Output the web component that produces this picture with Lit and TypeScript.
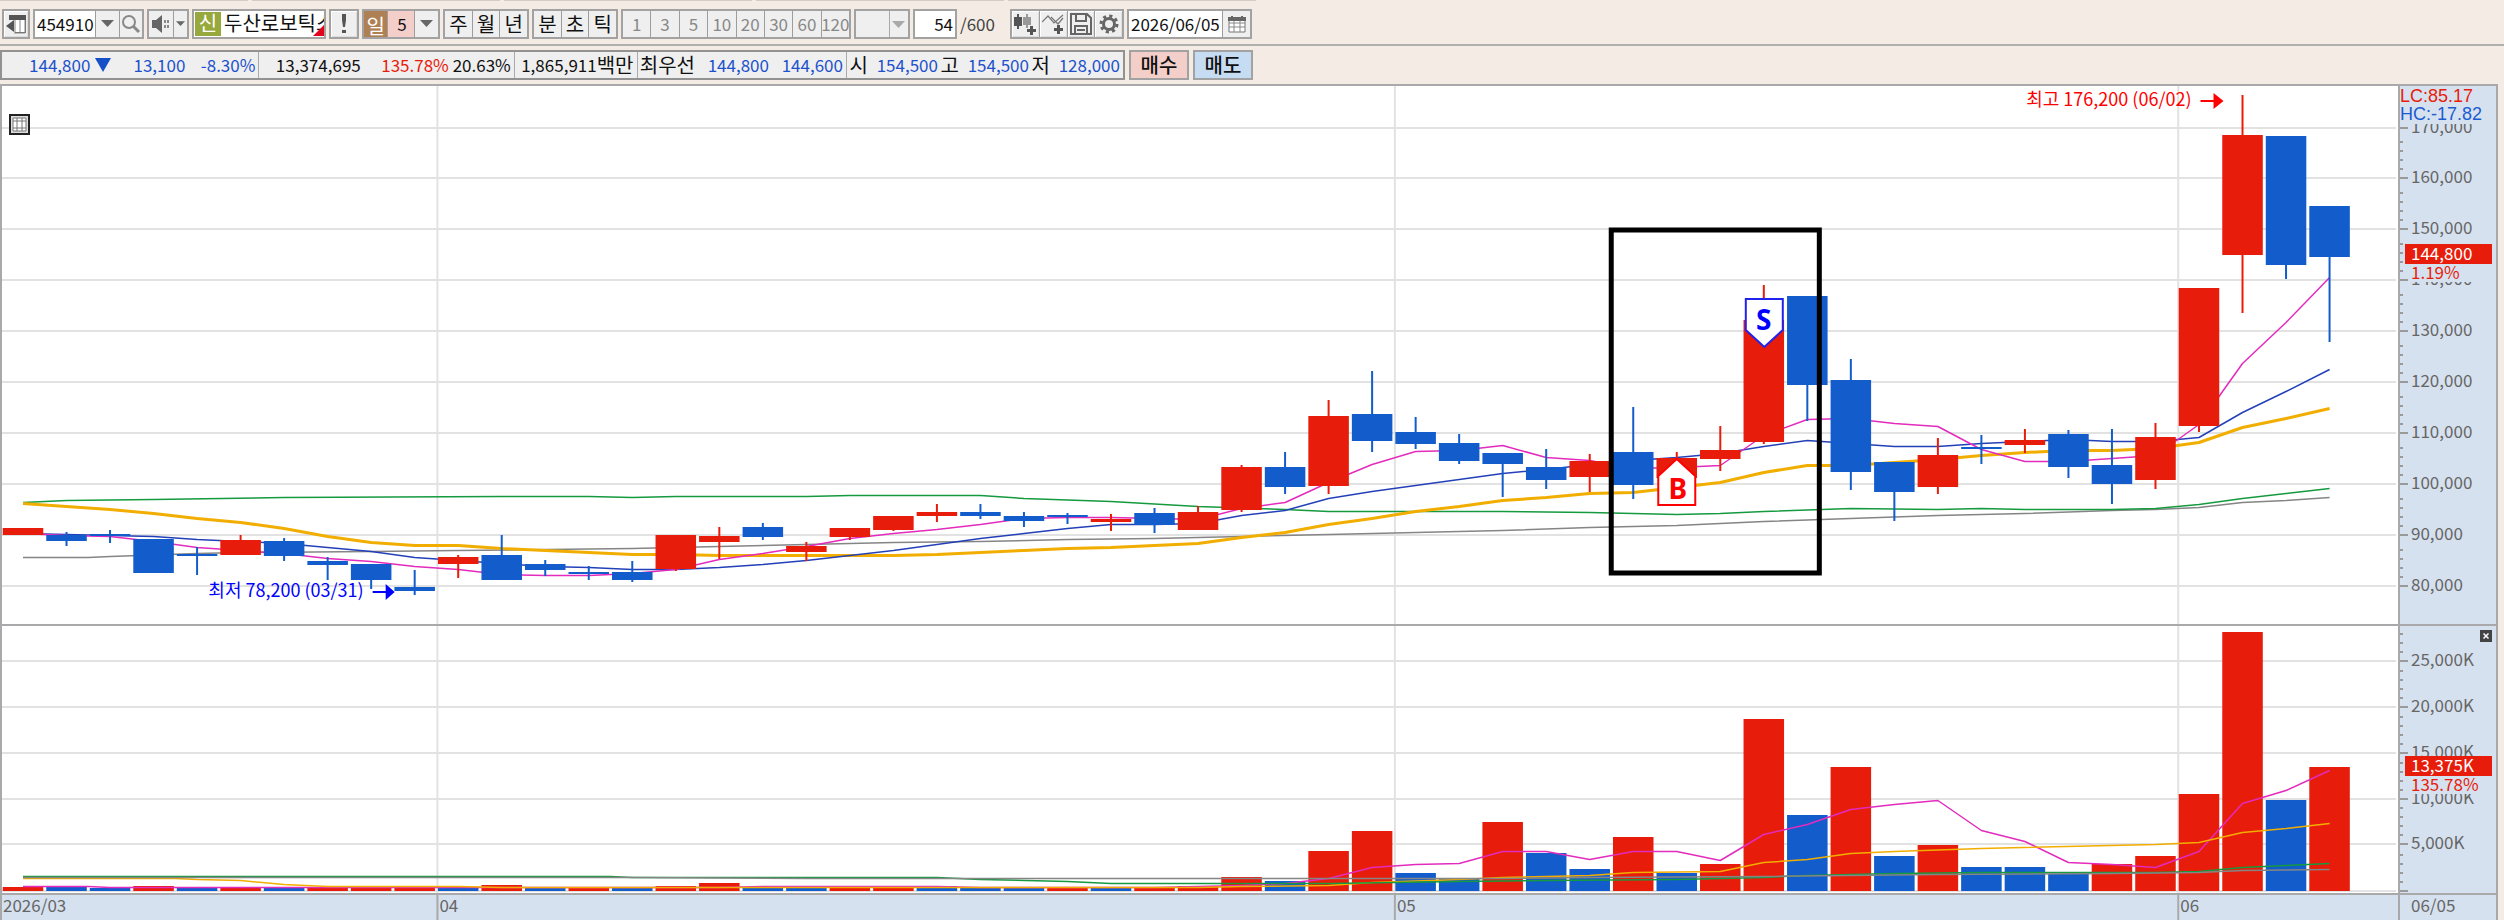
import { LitElement, html, css, svg } from "lit";
import { customElement, state } from "lit/decorators.js";
import { classMap } from "lit/directives/class-map.js";

/* One candle: body top, body bottom, wick top, wick bottom, rising flag (chart units). */
type Candle = [number, number, number, number, number];
/* One volume bar: top edge, rising flag. */
type Volume = [number, number];
type Points = [number, number][];

const CANDLES: Candle[] = [
  [528, 535, 528, 535, 1], [535, 541, 532, 546, 0], [534, 536, 530, 543, 0],
  [539, 573, 539, 573, 0], [554, 556, 547, 575, 0], [540, 555, 535, 555, 1],
  [541, 556, 538, 561, 0], [561, 565, 557, 580, 0], [564, 580, 564, 589, 0],
  [587, 591, 570, 595, 0], [557, 564, 555, 578, 1], [555, 580, 535, 580, 0],
  [564, 570, 560, 576, 0], [572, 574, 566, 580, 0], [572, 580, 561, 582, 0],
  [535, 569, 535, 571, 1], [536, 542, 527, 559, 1], [527, 537, 523, 540, 0],
  [546, 552, 542, 561, 1], [528, 537, 528, 540, 1], [516, 530, 516, 531, 1],
  [512, 516, 504, 522, 1], [512, 516, 504, 519, 0], [516, 521, 512, 527, 0],
  [515, 517, 513, 524, 0], [519, 522, 514, 531, 1], [513, 525, 508, 533, 0],
  [512, 530, 506, 530, 1], [467, 510, 465, 512, 1], [467, 487, 452, 494, 0],
  [416, 486, 400, 494, 1], [414, 441, 371, 452, 0], [432, 444, 417, 449, 0],
  [443, 461, 434, 464, 0], [453, 464, 453, 497, 0], [467, 480, 449, 489, 0],
  [461, 477, 454, 492, 1], [452, 485, 407, 499, 0], [458, 478, 452, 478, 1],
  [450, 459, 426, 471, 1], [320, 442, 285, 444, 1], [296, 385, 296, 421, 0],
  [380, 472, 359, 490, 0], [462, 492, 462, 521, 0], [455, 487, 438, 494, 1],
  [447, 449, 435, 464, 0], [440, 445, 429, 453, 1], [434, 467, 430, 478, 0],
  [465, 484, 429, 504, 0], [437, 480, 423, 489, 1], [288, 426, 288, 432, 1],
  [135, 255, 95, 313, 1], [136, 265, 136, 279, 0], [206, 257, 206, 342, 0],
];

const VOLUMES: Volume[] = [
  [887, 1], [886, 0], [888, 0], [886, 1], [888, 0], [888, 1], [888, 0], [888, 1], [888, 1],
  [888, 1], [887, 0], [885, 1], [888, 0], [888, 1], [888, 0], [886, 1], [883, 1], [888, 0],
  [888, 0], [888, 1], [888, 1], [886, 0], [888, 0], [888, 0], [888, 1], [888, 0], [888, 1],
  [886, 1], [877, 1], [881, 0], [851, 1], [831, 1], [873, 0], [879, 0], [822, 1], [853, 0],
  [869, 0], [837, 1], [873, 0], [864, 1], [719, 1], [815, 0], [767, 1], [856, 0], [845, 1],
  [867, 0], [867, 0], [874, 0], [864, 1], [856, 1], [794, 1], [632, 1], [800, 0], [767, 1],
];

const all = (...ys: number[]): Points => ys.map((y, i) => [i, y]);

const PRICE_MA: { cls: string; pts: Points }[] = [
  { cls: "gray", pts: [[0, 557], [1.5, 557], [2, 556], [4, 553], [5, 552], [8, 551], [10, 550], [12, 549], [14, 548], [16, 546], [18, 544], [20, 542], [22, 541], [24, 539], [26, 538], [28, 536], [30, 534], [32, 532], [34, 530], [36, 527], [38, 525], [40, 521], [42, 518], [44, 515], [46, 513], [48, 510], [49, 509], [50, 507], [51, 502], [52, 500], [53, 497]] },
  { cls: "green", pts: [[0, 502], [1, 500], [3, 499], [6, 497], [11, 496], [13, 496], [14, 497], [15, 496], [18, 496], [19, 495], [22, 495], [23, 498], [25, 501], [27, 506], [29, 509], [30, 511], [34, 511], [36, 512], [38, 514], [39, 513], [40, 511], [42, 508], [44, 509], [45, 508], [46, 509], [48, 509], [49, 508], [50, 504], [51, 498], [52, 493], [53, 488]] },
  { cls: "gold thick", pts: all(503, 506, 509, 513, 518, 522, 528, 536, 542, 545, 545, 548, 550, 552, 554, 554, 555, 555, 555, 555, 555, 554, 552, 550, 548, 547, 545, 543, 537, 532, 524, 518, 511, 506, 500, 497, 493, 492, 487, 482, 472, 465, 465, 462, 459, 455, 452, 450, 450, 448, 442, 427, 418, 408) },
  { cls: "navy", pts: all(533, 534, 535, 536, 539, 541, 543, 547, 551, 557, 560, 563, 566, 567, 569, 569, 567, 564, 560, 555, 550, 544, 538, 533, 528, 524, 524, 523, 515, 510, 498, 491, 485, 479, 473, 469, 464, 460, 457, 453, 446, 440, 443, 446, 446, 443, 441, 439, 441, 441, 437, 412, 391, 369) },
  { cls: "pink", pts: all(533, 535, 536, 541, 547, 550, 553, 558, 561, 566, 569, 574, 575, 575, 573, 569, 559, 553, 546, 538, 533, 529, 524, 518, 517, 517, 518, 519, 508, 502, 482, 464, 451, 450, 445, 457, 460, 468, 467, 465, 435, 419, 418, 423, 426, 449, 461, 461, 458, 455, 424, 363, 322, 277) },
];

const VOLUME_MA: { cls: string; pts: Points }[] = [
  { cls: "pink", pts: [[0, 886], [1.5, 886], [2, 887], [16, 887], [17, 886], [21, 886], [22, 887], [26, 887], [27, 886], [28, 885], [29, 883], [30, 878], [31, 867], [32, 864], [33, 863], [34, 851], [35, 851], [36, 859], [37, 851], [38, 851], [39, 860], [40, 834], [41, 824], [42, 809], [43, 804], [44, 800], [45, 830], [46, 841], [47, 862], [48, 864], [49, 867], [50, 851], [51, 803], [52, 790], [53, 770]] },
  { cls: "gold", pts: [[0, 878], [3.5, 878], [4, 879], [5, 880], [6, 884], [7, 886], [10, 886], [11, 887], [27, 887], [28, 886], [30, 885], [31, 882], [33, 879], [34, 877], [36, 875], [37, 872], [39, 871], [40, 862], [41, 859], [42, 853], [43, 851], [45, 848], [49, 844], [50, 842], [51, 832], [52, 828], [53, 823]] },
  { cls: "green", pts: [[0, 876], [13.5, 876], [14, 877], [21, 877], [22, 879], [24, 881], [25, 883], [30, 883], [33, 881], [35, 880], [38, 879], [39, 878], [40, 877], [41, 875], [43, 873], [45, 872], [49, 872], [50, 871], [51, 867], [52, 865], [53, 863]] },
  { cls: "gray", pts: [[0, 877], [14, 877], [18, 878], [34, 878], [36, 877], [40, 876], [44, 874], [48, 873], [50, 872], [51, 870], [53, 869]] },
];

const PRICE_TICKS: [string, number][] = [
  ["170,000", 128], ["160,000", 178], ["150,000", 229], ["140,000", 280], ["130,000", 331],
  ["120,000", 382], ["110,000", 433], ["100,000", 484], ["90,000", 535], ["80,000", 586],
];
const VOLUME_TICKS: [string, number][] = [
  ["25,000K", 661], ["20,000K", 707], ["15,000K", 753], ["10,000K", 799], ["5,000K", 844], ["", 891],
];
const MONTHS: [string, number][] = [["04", 10], ["05", 32], ["06", 50]];

const TOP = 84;
const BOTTOM = 920;
const RIGHT_SPACE = 105;
const REF_PLOT = 2399;

@customElement("stock-chart")
export class StockChart extends LitElement {
  @state() private w = 2504;
  private watcher?: ResizeObserver;

  static styles = css`
    :host { display: block; position: relative; font-family: "Noto Sans CJK KR", sans-serif; }
    svg { display: block; width: 100%; }
    text { font-size: 17px; fill: #666; }
    .wide { font-family: "Liberation Sans", "Noto Sans CJK KR", sans-serif; font-size: 18px; }
    .note { font-size: 18px; text-anchor: end; }
    .plot { fill: #fff; }
    .axis { fill: #d6e1ef; }
    .grid { stroke: #e2e2e2; stroke-width: 2; }
    .edge { stroke: #a9a9ab; stroke-width: 2; }
    .tick { stroke: #9a9a9a; stroke-width: 2; }
    .up { fill: #e81c0a; }
    .down { fill: #125ccb; }
    .wick { stroke-width: 2; }
    .wick.up { stroke: #e81c0a; }
    .wick.down { stroke: #125ccb; }
    .ma { fill: none; stroke-width: 1.5; stroke-linejoin: round; }
    .ma.thick { stroke-width: 3; }
    .pink { stroke: #e32bbd; }
    .navy { stroke: #2440b8; }
    .gold { stroke: #f2ae00; }
    .green { stroke: #159a3f; }
    .gray { stroke: #858585; }
    .red-text { fill: #f00; }
    .rise-text { fill: #e81c0a; }
    .fall-text { fill: #1d5bd0; }
    .blue-text { fill: #00f; }
    .white-text { fill: #fff; }
    .focus { fill: none; stroke: #000; stroke-width: 5; }
    .sell, .buy { fill: #fff; stroke-width: 2; }
    .sell { stroke: #2222ee; }
    .buy { stroke: #f00; }
    .mark { font-family: "Noto Sans", sans-serif; font-weight: 700; font-size: 28px; text-anchor: middle; }
    button { position: absolute; padding: 0; display: block; }
    .table-btn { left: 9px; top: 30px; width: 21px; height: 21px; border: 2px solid #222; background: #ddd; }
    .close-btn { right: 12px; top: 546px; width: 12px; height: 12px; border: 0; background: #444; }
    button svg { height: 100%; }
  `;

  connectedCallback() {
    super.connectedCallback();
    this.watcher = new ResizeObserver((entries) => {
      this.w = Math.round(entries[0].contentRect.width);
    });
    this.watcher.observe(this);
  }

  disconnectedCallback() {
    this.watcher?.disconnect();
    super.disconnectedCallback();
  }

  private get plot() { return this.w - RIGHT_SPACE; }
  private get step() { return (43.52 * this.plot) / REF_PLOT; }
  private cx(i: number) { return (23 * this.plot) / REF_PLOT + i * this.step; }

  private line(l: { cls: string; pts: Points }) {
    const pts = l.pts.map(([i, y]) => `${this.cx(i).toFixed(1)},${y + 0.5}`).join(" ");
    return svg`<polyline class="ma ${l.cls}" points=${pts} />`;
  }

  private candle(c: Candle, i: number) {
    const [top, bottom, high, low, up] = c;
    const cls = up ? "up" : "down";
    const bw = this.step - 3;
    const x = this.cx(i);
    return svg`
      <line class="wick ${cls}" x1=${x} x2=${x} y1=${high} y2=${low} />
      <rect class=${cls} x=${x - bw / 2} y=${top} width=${bw} height=${bottom - top} />`;
  }

  private bar(v: Volume, i: number) {
    const bw = this.step - 3;
    return svg`<rect class=${v[1] ? "up" : "down"} x=${this.cx(i) - bw / 2} y=${v[0]} width=${bw} height=${891 - v[0]} />`;
  }

  private ticks(list: [string, number][]) {
    const p = this.plot;
    return list.map(([label, y]) => svg`
      <line class="tick" x1=${p} x2=${p + 9} y1=${y} y2=${y} />
      ${[9, 18, 27, 36].map((d) => y - d > 122 ? svg`<line class="tick" x1=${p} x2=${p + 4} y1=${y - d} y2=${y - d} />` : "")}
      <text x=${p + 12} y=${y + 5}>${label}</text>`);
  }

  render() {
    const w = this.w;
    const p = this.plot;
    const right = w - 7;
    const gx = (i: number) => this.cx(i) - this.step / 2 + 1;
    const sx = this.cx(40);
    const bx = this.cx(38);
    const hx = this.cx(51);
    const lx = this.cx(9);
    return html`
      <svg viewBox="0 ${TOP} ${w} ${BOTTOM - TOP}" height=${BOTTOM - TOP} role="img" aria-label="두산로보틱스 일봉 차트">
        <rect class="plot" x="0" y=${TOP} width=${p} height=${893 - TOP} />
        <rect class="axis" x=${p} y=${TOP} width=${right - p} height=${BOTTOM - TOP} />
        <rect class="axis" x="0" y="893" width=${right} height="27" />
        ${[...PRICE_TICKS, ...VOLUME_TICKS].map(([, y]) => svg`<line class="grid" x1="2" x2=${p - 3} y1=${y} y2=${y} />`)}
        ${MONTHS.map(([, i]) => svg`<line class="grid" x1=${gx(i)} x2=${gx(i)} y1=${TOP} y2="893" />`)}
        ${PRICE_MA.map((l) => this.line(l))}
        ${CANDLES.map((c, i) => this.candle(c, i))}
        ${VOLUMES.map((v, i) => this.bar(v, i))}
        ${VOLUME_MA.map((l) => this.line(l))}
        ${this.ticks(PRICE_TICKS)}
        ${this.ticks(VOLUME_TICKS)}

        <rect class="axis" x=${p + 1} y="86" width="92" height="38" />
        <text class="wide rise-text" x=${p + 1} y="102">LC:85.17</text>
        <text class="wide fall-text" x=${p + 1} y="120">HC:-17.82</text>
        <rect class="axis" x=${p + 10} y="262" width="82" height="20" />
        <rect class="up" x=${p + 6} y="244" width="87" height="20" />
        <text class="white-text" x=${p + 12} y="260">144,800</text>
        <text class="rise-text" x=${p + 12} y="279">1.19%</text>
        <rect class="axis" x=${p + 10} y="775" width="82" height="19" />
        <rect class="up" x=${p + 6} y="756" width="87" height="20" />
        <text class="white-text" x=${p + 12} y="772">13,375K</text>
        <text class="rise-text" x=${p + 12} y="791">135.78%</text>

        <line class="edge" x1="0" x2=${right} y1="85" y2="85" />
        <line class="edge" x1="1" x2="1" y1=${TOP} y2=${BOTTOM} />
        <line class="edge" x1="0" x2=${right} y1="625" y2="625" />
        <line class="edge" x1="0" x2=${right} y1="894" y2="894" />
        <line class="edge" x1=${p} x2=${p} y1=${TOP} y2=${BOTTOM} />
        <line class="edge" x1=${right} x2=${right} y1=${TOP} y2=${BOTTOM} />
        ${MONTHS.map(([label, i]) => svg`
          <line class="edge" x1=${gx(i)} x2=${gx(i)} y1="893" y2=${BOTTOM} />
          <text x=${gx(i) + 2} y="912">${label}</text>`)}
        <text x="3" y="912">2026/03</text>
        <text x=${p + 12} y="912">06/05</text>

        <rect class="focus" x=${this.cx(37) - 22} y="230" width=${this.step * 4 + 34} height="343" />
        <path class="sell" d="M${sx - 18} 299h37v31l-18.500 17l-18.500-17z" />
        <text class="mark blue-text" x=${sx} y="330">S</text>
        <path class="buy" d="M${bx} 459l18.500 17v29h-37v-29z" />
        <text class="mark red-text" x=${bx + 1} y="499">B</text>

        <text class="note red-text" x=${hx - 51} y="106">최고 176,200 (06/02)</text>
        <path class="red-text" d="M${hx - 42} 100h13v-7l10 8l-10 8v-7h-13z" />
        <text class="note blue-text" x=${lx - 51} y="597">최저 78,200 (03/31)</text>
        <path class="blue-text" d="M${lx - 42} 591h13v-7l9 8l-9 8v-7h-13z" />
      </svg>
      <button class="table-btn" aria-label="표 보기">
        <svg viewBox="0 0 17 17"><path d="M2 2h13v13h-13zM2 5h13M2 12h13M6 2v13M11 2v13" fill="#fff" stroke="#777" /></svg>
      </button>
      <button class="close-btn" aria-label="거래량 닫기">
        <svg viewBox="0 0 12 12"><path d="M3.500 3.500l5 5M8.500 3.500l-5 5" stroke="#fff" stroke-width="1.500" /></svg>
      </button>`;
  }
}

const arrow = html`<svg width="13" height="8" viewBox="0 0 13 8"><path d="M0 0h13l-6.500 7z" fill="#666" /></svg>`;

@customElement("app-root")
export class AppRoot extends LitElement {
  static styles = css`
    :host {
      display: block; min-height: 100vh; background: #f3ebe4; color: #111;
      font-family: "Noto Sans CJK KR", sans-serif;
      font-size: 20px; line-height: 26px;
    }
    * { box-sizing: border-box; }
    .tabs { display: flex; gap: 4px; height: 1px; padding-right: 1248px; }
    .tabs i { flex: 1; background: #d2cdc8; }
    .toolbar { display: flex; gap: 3px; padding: 8px 2px 5px; border-bottom: 2px solid #b0afac; }
    .group { display: flex; height: 30px; border: 2px solid #a2a2a2; background: #efefef; overflow: hidden; }
    button, input, select {
      font: inherit; color: inherit; margin: 0; padding: 0; border: 0; border-radius: 0;
      background: none; min-width: 0; height: 26px; outline: none; appearance: none;
    }
    button { flex: 1; display: flex; align-items: center; justify-content: center; }
    .group > * + * { border-left: 1px solid #9d9d9d; }
    .raised button { box-shadow: inset 1px 1px 0 #fff, inset -1px -1px 0 #ddd; }
    .num, input { font-size: 17px; }
    .w28 { width: 28px; }
    .w30 { width: 30px; }
    .w42 { width: 42px; }
    .w44 { width: 44px; }
    .w56 { width: 56px; }
    .w78 { width: 78px; }
    .w86 { width: 86px; }
    .w111 { width: 111px; }
    .w114 { width: 114px; }
    .w125 { width: 125px; }
    .w134 { width: 134px; }
    .w230 { width: 230px; }
    .white { background: #fff; }
    .code { flex: 0 0 60px; padding-left: 2px; }
    .small { flex: 0 0 14px; }
    .small svg { width: 9px; height: 6px; }
    .grey { background: #efefef; }
    .badge { flex: 0 0 26px; height: 24px; margin: 1px 3px 1px 1px; background: #97a83c; color: #fff; text-align: center; line-height: 22px; }
    .name { flex: 1; position: relative; overflow: hidden; white-space: nowrap; border: 0 !important; line-height: 24px; }
    .corner { position: absolute; right: 0; bottom: 1px; border-left: 11px solid transparent; border-bottom: 11px solid #e3001b; }
    .day { background: #b08055; color: #fff; padding-top: 3px; }
    .five { background: #f4cfca; padding-left: 2px; }
    .faded { color: #888; }
    .faded svg { opacity: 0.5; }
    .picker { position: relative; }
    .picker select { width: 100%; }
    .picker svg { position: absolute; right: 3px; top: 10px; pointer-events: none; border: 0; }
    .picker i { position: absolute; right: 18px; top: 0; bottom: 0; border-left: 1px solid #aaa; }
    .count { text-align: right; padding-right: 2px; width: 100%; }
    .total { width: 47px; padding-top: 2px; color: #444; }
    .date { flex: 0 0 93px; padding-left: 2px; }
    .quotes { display: flex; gap: 4px; padding: 4px 0; }
    .board { display: flex; height: 30px; width: 1125px; border: 2px solid #929292; background: #efefef; }
    .cell { display: flex; justify-content: flex-end; padding-right: 3px; white-space: nowrap; line-height: 25px; }
    .cell + .cell { border-left: 1px solid #aaa; }
    .cell span { text-align: right; }
    .blue { color: #1d52cc; }
    .red { color: #e81c0a; }
    .c1 { width: 257px; }
    .c2 { width: 256px; }
    .c3 { width: 123px; }
    .c4 { width: 210px; }
    .c5 { flex: 1; }
    .n62 { width: 62px; }
    .n70 { width: 70px; }
    .n74 { width: 74px; }
    .n88 { width: 88px; }
    .mark { display: flex; align-items: center; width: 21px; padding-left: 5px; }
    .label { width: 21px; }
    .order { flex: 0 0 60px; height: 30px; border: 2px solid #a2a2a2; font-weight: 500; }
    .buy { background: #f4cfca; }
    .sell { background: #c5dcf2; }
  `;

  private periods = ["1", "3", "5", "10", "20", "30", "60", "120"];

  render() {
    return html`
      <div class="tabs">${[1, 2, 3, 4, 5].map(() => html`<i></i>`)}</div>
      <div class="toolbar">
        <div class="group raised w28"><button aria-label="패널 접기">
          <svg width="20" height="20" viewBox="0 0 20 20"><path d="M3 1h17v18H9v-1h10V6H3z" fill="#666" /><path d="M9 6h10v12H9z" fill="#fff" /><path d="M3 1h17v5H3z" fill="#555" /><path d="M9 6v12M14 6v12M19 6v13H8" stroke="#888" fill="none" /><path d="M0 12l8-6v12z" fill="#555" /></svg>
        </button></div>
        <div class="group w111">
          <input class="code white" aria-label="종목코드" value="454910" />
          <button class="grey" aria-label="종목 목록">${arrow}</button>
          <button class="grey" aria-label="검색"><svg width="20" height="20" viewBox="0 0 20 20" fill="none" stroke="#888"><circle cx="8" cy="8" r="6" stroke-width="2" /><path d="M12 12l6 6" stroke-width="3" /></svg></button>
        </div>
        <div class="group w42">
          <button aria-label="소리"><svg width="18" height="18" viewBox="0 0 18 18"><path d="M0 5h4l6-5v18l-6-5H0z" fill="#666" /><path d="M12 5h2v3h-2zM15 5h2v3h-2zM12 10h2v3h-2zM15 10h2v3h-2z" fill="#888" /></svg></button>
          <button class="small" aria-label="소리 메뉴">${arrow}</button>
        </div>
        <div class="group white w134"><span class="badge">신</span><span class="name">두산로보틱스<span class="corner"></span></span></div>
        <div class="group raised w30"><button aria-label="알림"><svg width="6" height="20" viewBox="0 0 6 20"><path d="M1 0h4v6l-1 7h-2l-1-7zM1 16h4v3h-4z" fill="#555" /></svg></button></div>
        <div class="group w78"><button class="day">일</button><button class="five num">5</button><button aria-label="일 주기">${arrow}</button></div>
        <div class="group w86">${["주", "월", "년"].map((t) => html`<button>${t}</button>`)}</div>
        <div class="group w86">${["분", "초", "틱"].map((t) => html`<button>${t}</button>`)}</div>
        <div class="group faded w230">${this.periods.map((t) => html`<button class="num">${t}</button>`)}</div>
        <div class="group faded picker w56"><select aria-label="주기 선택" disabled></select><i></i>${arrow}</div>
        <div class="group white w44"><input class="count" aria-label="봉 개수" value="54" /></div>
        <span class="total num">/600</span>
        <div class="group raised w114">
          <button aria-label="캔들 추가"><svg width="22" height="22" viewBox="0 0 22 22"><path d="M0 4h3V1h2v3h3v9H5v3H3v-3H0z" fill="#555" /><path d="M9 4h3V1h2v3h3v8h-3v3h-2v-3H9z" fill="#999" /><path d="M13 16h3v-3h3v3h3v3h-3v3h-3v-3h-3z" fill="#555" /></svg></button>
          <button aria-label="지표 추가"><svg width="22" height="22" viewBox="0 0 22 22"><path d="M0 9l6-6 6 7 9-8M9 4l7 7 5-6" fill="none" stroke="#777" stroke-width="1.200" /><path d="M12 15h3v-3h3v3h3v3h-3v3h-3v-3h-3z" fill="#555" /></svg></button>
          <button aria-label="저장"><svg width="22" height="22" viewBox="0 0 22 22" fill="none" stroke="#666" stroke-width="2"><path d="M1 1h16l4 4v16H1zM6 1v7h10V1M5 21v-8h12v8M7 17h8" /></svg></button>
          <button aria-label="설정"><svg width="20" height="20" viewBox="0 0 20 20" fill="none" stroke="#666"><circle cx="10" cy="10" r="5.500" stroke-width="3" /><circle cx="10" cy="10" r="8" stroke-width="3" stroke-dasharray="3.140 3.140" /></svg></button>
        </div>
        <div class="group w125">
          <input class="date white" aria-label="기준일" value="2026/06/05" />
          <button class="grey" aria-label="달력"><svg width="18" height="17" viewBox="0 0 18 17"><path d="M1 2h16v14H1z" fill="#fff" stroke="#777" /><path d="M1 7h16M1 11h16M6 2v14M12 2v14" stroke="#888" /><path d="M0 1h3V0h2v1h8V0h2v1h3v4H0z" fill="#666" /></svg></button>
        </div>
      </div>

      <div class="quotes">
        <div class="board">
          <div class="cell c1"><span class="num blue">144,800</span><span class="mark"><svg width="16" height="14" viewBox="0 0 16 14"><path d="M0 0h16L8 14z" fill="#1550c8" /></svg></span><span class="num blue n74">13,100</span><span class="num blue n70">-8.30%</span></div>
          <div class="cell c2"><span class="num">13,374,695</span><span class="num red n88">135.78%</span><span class="num n62">20.63%</span></div>
          <div class="cell c3"><span class="num">1,865,911</span><span>백만</span></div>
          <div class="cell c4"><span>최우선</span><span class="num blue n74">144,800</span><span class="num blue n74">144,600</span></div>
          <div class="cell c5">${[["시", "154,500"], ["고", "154,500"], ["저", "128,000"]].map(([k, v]) => html`<span class="label">${k}</span><span class="num blue n70">${v}</span>`)}</div>
        </div>
        <button class=${classMap({ order: true, buy: true })}>매수</button>
        <button class=${classMap({ order: true, sell: true })}>매도</button>
      </div>
      <stock-chart></stock-chart>`;
  }
}
